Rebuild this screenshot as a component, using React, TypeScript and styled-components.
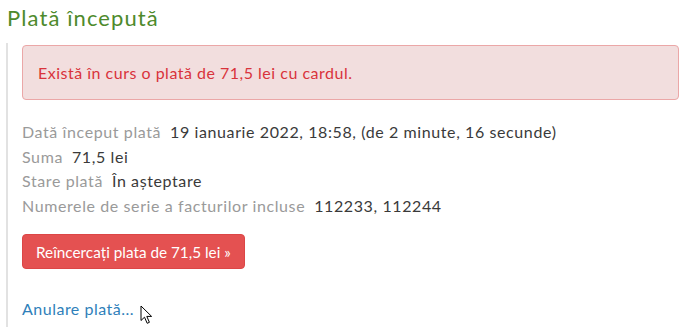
import React from "react";
import styled, { createGlobalStyle } from "styled-components";

const Global = createGlobalStyle`
  html, body { margin: 0; padding: 0; background: #fff; }
  body { font-family: Lato, "Open Sans", sans-serif; color: #333; }
`;

const Page = styled.div`
  width: 687px;
  height: 327px;
  overflow: hidden;
  box-sizing: border-box;
  padding: 4px 8px 0 6px;
`;

const Title = styled.h2`
  margin: 0 0 0 1px;
  font-size: 22px;
  font-weight: 400;
  letter-spacing: 1.1px;
  line-height: 27px;
  color: #4e8a2c;
`;

const Section = styled.div`
  margin-top: 12px;
  border-left: 2px solid #e2e2e2;
  padding: 2px 0 20px 14px;
  height: 320px;
`;

const Alert = styled.div`
  box-sizing: border-box;
  height: 55px;
  background: #f2dede;
  border: 1px solid #eba7a7;
  border-radius: 4px;
  padding: 0 15px;
  display: flex;
  align-items: center;
  color: #d9333b;
  font-size: 16px;
  letter-spacing: 0.5px;
`;

const Details = styled.dl`
  margin: 20px 0 0 0;
  font-size: 16px;
  letter-spacing: 0.6px;
  line-height: 24.5px;
`;

const Row = styled.div`
  display: flex;
  gap: 9px;
`;

const Label = styled.dt`
  color: #9a9a9a;
`;

const Value = styled.dd`
  margin: 0;
  color: #3a3a3a;
`;

const RetryButton = styled.button`
  margin-top: 16px;
  height: 35px;
  padding: 0 13px;
  border: 1px solid #dc4646;
  border-radius: 4px;
  background: #e45151;
  color: #fff;
  font-family: Lato, "Open Sans", sans-serif;
  font-size: 15.3px;
  cursor: pointer;
`;

const LinkRow = styled.div`
  position: relative;
  margin-top: 28px;
  font-size: 16px;
  letter-spacing: 0.5px;
  line-height: 24px;
`;

const CancelLink = styled.a`
  color: #2f7fba;
  text-decoration: none;
`;

const Cursor = styled.svg`
  position: absolute;
  left: 118px;
  top: 8px;
`;

export default function App() {
  return (
    <Page>
      <Global />
      <Title>Plată începută</Title>
      <Section>
        <Alert>Există în curs o plată de 71,5 lei cu cardul.</Alert>
        <Details>
          <Row>
            <Label>Dată început plată</Label>
            <Value>19 ianuarie 2022, 18:58, (de 2 minute, 16 secunde)</Value>
          </Row>
          <Row>
            <Label>Suma</Label>
            <Value>71,5 lei</Value>
          </Row>
          <Row>
            <Label>Stare plată</Label>
            <Value>În așteptare</Value>
          </Row>
          <Row>
            <Label>Numerele de serie a facturilor incluse</Label>
            <Value>112233, 112244</Value>
          </Row>
        </Details>
        <RetryButton>Reîncercați plata de 71,5 lei »</RetryButton>
        <LinkRow>
          <CancelLink href="#">Anulare plată...</CancelLink>
          <Cursor width="14" height="20" viewBox="0 0 14 20">
            <path
              d="M1 1 L1 15.5 L4.5 12.2 L7.2 18.3 L9.4 17.3 L6.8 11.4 L11.6 11.4 Z"
              fill="#fff"
              stroke="#000"
              strokeWidth="1"
              strokeLinejoin="round"
            />
          </Cursor>
        </LinkRow>
      </Section>
    </Page>
  );
}
